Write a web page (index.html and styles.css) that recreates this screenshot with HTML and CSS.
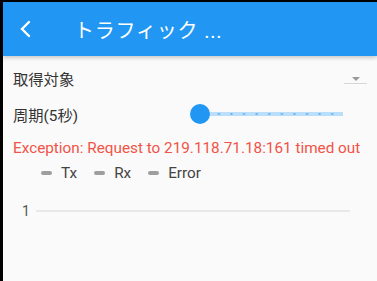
FILE: index.html
```html
<!DOCTYPE html>
<html lang="ja">
<head>
  <meta charset="UTF-8">
  <title>トラフィック</title>
  <link rel="stylesheet" href="styles.css">
</head>
<body>
  <div class="screen">
    <header class="appbar">
      <svg class="back" width="14" height="18" viewBox="0 0 14 18">
        <path d="M11 2 L4 9 L11 16" fill="none" stroke="#fff" stroke-width="2.4" stroke-linecap="round"/>
      </svg>
      <div class="title">トラフィック ...</div>
    </header>
    <main class="content">
      <div class="row">
        <span class="label">取得対象</span>
        <div class="dropdown"><span class="caret"></span></div>
      </div>
      <div class="row">
        <span class="label">周期(5秒)</span>
        <div class="slider">
          <div class="track"></div>
          <div class="thumb"></div>
        </div>
      </div>
      <p class="error">Exception: Request to 219.118.71.18:161 timed out</p>
      <div class="legend">
        <span class="item"><i></i>Tx</span>
        <span class="item"><i></i>Rx</span>
        <span class="item"><i></i>Error</span>
      </div>
      <div class="chart">
        <span class="tick">1</span>
        <div class="gridline"></div>
      </div>
    </main>
  </div>
</body>
</html>
```
FILE: styles.css
```css
body {
  margin: 0;
  background: #000;
  font-family: Roboto, "Noto Sans CJK JP", sans-serif;
}

.screen {
  margin: 2px 0 0 3px;
  height: 279px;
  background: #fafafa;
  overflow: hidden;
}

.appbar {
  height: 54px;
  background: #2196f3;
  display: flex;
  align-items: center;
  box-shadow: 0 2px 4px rgba(0,0,0,0.2);
  position: relative;
}

.back {
  margin-left: 15px;
}

.title {
  margin-left: 42px;
  color: #fff;
  font-size: 20px;
  letter-spacing: 0.8px;
}

.content {
  padding: 4px 10px 0 10px;
}

.row {
  display: flex;
  align-items: center;
  justify-content: space-between;
  height: 36px;
}

.label {
  font-size: 15.3px;
  color: #333;
}

.dropdown {
  width: 23px;
  height: 10px;
  border-bottom: 1px solid #d6d6d6;
  display: flex;
  justify-content: center;
  align-items: flex-start;
}

.caret {
  width: 0;
  height: 0;
  margin-top: 4px;
  border-left: 4px solid transparent;
  border-right: 4px solid transparent;
  border-top: 4px solid #999;
}

.slider {
  position: relative;
  width: 153px;
  height: 22px;
  margin-right: 24px;
}

.track {
  position: absolute;
  left: 10px;
  right: 0;
  top: 9px;
  height: 4px;
  background: #bbdefb radial-gradient(circle, #64b5f6 1px, transparent 1.2px) 0 0 / 12.6px 4px repeat-x;
}

.thumb {
  position: absolute;
  left: 0;
  top: 1px;
  width: 20px;
  height: 20px;
  border-radius: 50%;
  background: #2196f3;
}

.error {
  margin: 4px 0 0 0;
  color: #f25346;
  font-size: 15.3px;
  line-height: 24px;
}

.legend {
  display: flex;
  gap: 17px;
  padding-left: 28px;
  margin-top: 1px;
  height: 24px;
  align-items: center;
}

.item {
  display: flex;
  align-items: center;
  font-size: 15.3px;
  color: #444;
}

.item i {
  width: 11px;
  height: 4px;
  border-radius: 2px;
  background: #9e9e9e;
  margin-right: 9px;
}

.chart {
  display: flex;
  align-items: center;
  margin-top: 18px;
  padding-left: 9px;
}

.tick {
  font-size: 14px;
  line-height: 16px;
  color: #555;
  margin-right: 6px;
}

.gridline {
  width: 314px;
  height: 2px;
  background: #e8e8e8;
}
```
